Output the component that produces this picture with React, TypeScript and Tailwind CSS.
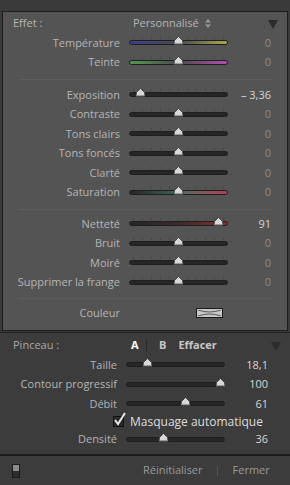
import type { ReactNode } from 'react';

type Track = 'plain' | 'temp' | 'tint' | 'sat' | 'sharp';

const trackBg: Record<Track, string> = {
  plain: 'bg-[#262626]',
  temp: 'bg-gradient-to-r from-[#3a3f8a] via-[#4a4a4a] to-[#a8a84a]',
  tint: 'bg-gradient-to-r from-[#4f9a4f] via-[#4a4a4a] to-[#b04ab0]',
  sat: 'bg-gradient-to-r from-[#262626] via-[#3c6a5a] to-[#b03a5a]',
  sharp: 'bg-gradient-to-r from-[#262626] via-[#3a2a2a] to-[#8a2a2a]',
};

const ticks = [0, 1, 2, 3, 4, 5, 6, 7, 8, 9, 10];

function Thumb({ pos }: { pos: number }) {
  return (
    <svg
      width="11"
      height="9"
      viewBox="0 0 11 9"
      className="absolute top-[-2px]"
      style={{ left: `calc(${pos * 100}% - 5.5px)` }}
    >
      <path d="M5.5 0.5 L9.5 4.5 L10 8.5 L1 8.5 L1.5 4.5 Z" fill="#d8d8d8" stroke="#3a3a3a" strokeWidth="0.8" />
      <path d="M2 7 L9 7 L9 8 L2 8 Z" fill="#9a9a9a" />
    </svg>
  );
}

function Slider({ pos, track = 'plain', ticked = true }: { pos: number; track?: Track; ticked?: boolean }) {
  return (
    <div className="relative w-[99px] h-[9px] ml-[9px] flex items-center">
      {ticked && (
        <div className="absolute inset-x-[4px] top-[-1px] flex justify-between">
          {ticks.map((t) => (
            <span key={t} className="w-px h-[2px] bg-[#444]" />
          ))}
        </div>
      )}
      <div className={`w-full h-[5px] rounded-full border border-[#1e1e1e] ${trackBg[track]}`} />
      <Thumb pos={pos} />
    </div>
  );
}

function Row({
  label,
  pos,
  value,
  bright = false,
  track,
  ticked = true,
}: {
  label: string;
  pos: number;
  value: string;
  bright?: boolean;
  track?: Track;
  ticked?: boolean;
}) {
  return (
    <div className="h-[19.5px] flex items-center">
      <span className="w-[117px] text-right text-[#b4b4b4] whitespace-nowrap">{label}</span>
      <Slider pos={pos} track={track} ticked={ticked} />
      <span className={`w-[43px] text-right ${bright ? 'text-[#d6d6d6]' : 'text-[#8c8c8c]'}`}>{value}</span>
    </div>
  );
}

function Sep({ className }: { className: string }) {
  return <div className={`mx-[15px] h-px bg-[#464646] border-b border-[#5e5e5e] ${className}`} />;
}

function Arrow({ className }: { className?: string }) {
  return (
    <svg width="10" height="9" viewBox="0 0 10 9" className={className}>
      <path d="M0 0 L10 0 L5 9 Z" fill="#2c2c2c" />
    </svg>
  );
}

function Section({ children }: { children: ReactNode }) {
  return <div className="flex flex-col">{children}</div>;
}

export default function App() {
  return (
    <div
      className="w-[290px] h-[485px] bg-[#3a3a3a] flex flex-col text-[11px] overflow-hidden"
      style={{ fontFamily: '"Open Sans", "Noto Sans", sans-serif' }}
    >
      <div className="h-[11px] shrink-0" />
      <div className="mx-[2px] border border-[#1e1e1e] bg-[#545454] h-[320px] shrink-0 flex flex-col pt-[1px]">
        <div className="h-[20px] flex items-center relative">
          <span className="pl-[10px] w-[130px] text-[#b4b4b4]">Effet :</span>
          <span className="text-[#b4b4b4]">Personnalisé</span>
          <svg width="6" height="9" viewBox="0 0 6 9" className="ml-[6px]">
            <path d="M0 3.5 L3 0 L6 3.5 Z M0 5.5 L3 9 L6 5.5 Z" fill="#9a9a9a" />
          </svg>
          <Arrow className="absolute right-[9px] top-[7px]" />
        </div>
        <Section>
          <Row label="Température" pos={0.5} value="0" track="temp" />
          <Row label="Teinte" pos={0.5} value="0" track="tint" />
        </Section>
        <Sep className="mt-[7px] mb-[5px]" />
        <Section>
          <Row label="Exposition" pos={0.12} value="– 3,36" bright />
          <Row label="Contraste" pos={0.5} value="0" />
          <Row label="Tons clairs" pos={0.5} value="0" />
          <Row label="Tons foncés" pos={0.5} value="0" />
          <Row label="Clarté" pos={0.5} value="0" />
          <Row label="Saturation" pos={0.5} value="0" track="sat" />
        </Section>
        <Sep className="mt-[7px] mb-[4px]" />
        <Section>
          <Row label="Netteté" pos={0.9} value="91" bright track="sharp" />
          <Row label="Bruit" pos={0.5} value="0" />
          <Row label="Moiré" pos={0.5} value="0" />
          <Row label="Supprimer la frange" pos={0.5} value="0" />
        </Section>
        <Sep className="mt-[6px] mb-[4px]" />
        <div className="h-[19.5px] flex items-center">
          <span className="w-[117px] text-right text-[#b4b4b4]">Couleur</span>
          <span className="ml-[76px] w-[27px] h-[10px] border border-[#1a1a1a] bg-[#c8c8c8] flex items-center justify-center">
            <svg width="23" height="6" viewBox="0 0 23 6">
              <path d="M0 0 Q11.5 4 23 0 M0 6 Q11.5 2 23 6" stroke="#555" strokeWidth="1" fill="none" />
            </svg>
          </span>
        </div>
      </div>
      <div className="mt-[1px] h-px bg-[#222]" />
      <div className="flex-1 bg-[#3c3c3c] flex flex-col">
        <div className="h-[20px] mt-[2px] flex items-center relative">
          <span className="pl-[13px] w-[131px] text-[#a8a8a8]">Pinceau :</span>
          <span className="font-bold text-white w-[15px]">A</span>
          <span className="w-px h-[13px] bg-[#2a2a2a]" />
          <span className="ml-[12px] font-bold text-[#c8c8c8]">B</span>
          <span className="ml-[12px] font-bold text-[#c8c8c8]">Effacer</span>
          <Arrow className="absolute right-[9px] top-[7px]" />
        </div>
        <Row label="Taille" pos={0.22} value="18,1" bright ticked={false} />
        <Row label="Contour progressif" pos={0.95} value="100" bright ticked={false} />
        <Row label="Débit" pos={0.6} value="61" bright ticked={false} />
        <div className="h-[16px] flex items-center pl-[113px]">
          <span className="relative w-[11px] h-[11px] border border-[#111] bg-[#2a2a2a]">
            <svg width="14" height="14" viewBox="0 0 14 14" className="absolute left-[-1px] top-[-5px]">
              <path d="M2 8 L5 12 L12 1" stroke="#e8e8e8" strokeWidth="2" fill="none" />
            </svg>
          </span>
          <span className="ml-[6px] text-[12px] text-[#dcdcdc]">Masquage automatique</span>
        </div>
        <Row label="Densité" pos={0.38} value="36" bright ticked={false} />
        <div className="mt-[5px] h-[2px] bg-[#1c1c1c]" />
        <div className="flex-1 flex items-center">
          <span className="ml-[12px] w-[8px] h-[14px] border border-[#1a1a1a] flex flex-col">
            <span className="flex-1 bg-[#8a8a8a]" />
            <span className="flex-1 bg-[#2e2e2e]" />
          </span>
          <span className="ml-[123px] text-[#9a9a9a]">Réinitialiser</span>
          <span className="ml-[14px] w-px h-[10px] bg-[#555]" />
          <span className="ml-[15px] text-[#9a9a9a]">Fermer</span>
        </div>
      </div>
    </div>
  );
}
